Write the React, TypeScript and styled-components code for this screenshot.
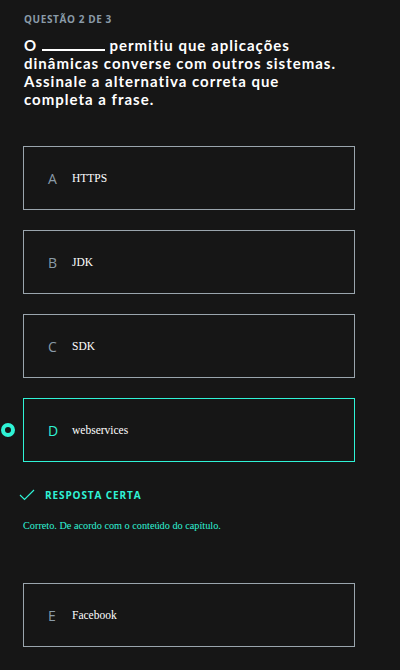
import React from "react";
import styled, { createGlobalStyle } from "styled-components";

const CYAN = "#2ff3d6";

const GlobalStyle = createGlobalStyle`
  html, body {
    margin: 0;
    background: #161616;
  }
`;

type Option = { letter: string; text: string };

const OPTIONS: Option[] = [
  { letter: "A", text: "HTTPS" },
  { letter: "B", text: "JDK" },
  { letter: "C", text: "SDK" },
  { letter: "D", text: "webservices" },
  { letter: "E", text: "Facebook" },
];

const SELECTED = "D";

const App = () => {
  return (
    <>
      <GlobalStyle />
      <Page>
        <Counter>Questão 2 de 3</Counter>
        <Question>
          O <Blank /> permitiu que aplicações
          <br />
          dinâmicas converse com outros sistemas.
          <br />
          Assinale a alternativa correta que
          <br />
          completa a frase.
        </Question>
        <OptionList>
          {OPTIONS.map((option) => {
            const selected = option.letter === SELECTED;
            return (
              <OptionBlock key={option.letter} $spaced={option.letter === "E"}>
                <OptionBox $selected={selected}>
                  {selected && <Radio />}
                  <Letter $selected={selected}>{option.letter}</Letter>
                  <OptionText>{option.text}</OptionText>
                </OptionBox>
                {selected && (
                  <Feedback>
                    <FeedbackTitle>
                      <svg width="16" height="12" viewBox="0 0 16 12">
                        <polyline
                          points="1,6 5.5,10.5 15,1"
                          fill="none"
                          stroke={CYAN}
                          strokeWidth="1.2"
                        />
                      </svg>
                      Resposta certa
                    </FeedbackTitle>
                    <FeedbackText>
                      Correto. De acordo com o conteúdo do capítulo.
                    </FeedbackText>
                  </Feedback>
                )}
              </OptionBlock>
            );
          })}
        </OptionList>
      </Page>
    </>
  );
};

const Page = styled.div`
  padding: 12px 45px 24px 23px;
  font-family: "Open Sans", Lato, sans-serif;
`;

const Counter = styled.div`
  font-size: 10px;
  font-weight: 700;
  text-transform: uppercase;
  color: #8a9ba8;
  letter-spacing: 0.6px;
  padding-left: 1px;
`;

const Question = styled.h1`
  margin: 10px 0 0;
  padding-left: 1px;
  font-family: Lato, sans-serif;
  font-size: 15px;
  line-height: 18px;
  font-weight: 700;
  color: #ffffff;
  letter-spacing: 1px;
  white-space: nowrap;
`;

const Blank = styled.span`
  display: inline-block;
  width: 63px;
  height: 1px;
  border-bottom: 2px solid #ffffff;
  vertical-align: baseline;
`;

const OptionList = styled.div`
  display: flex;
  flex-direction: column;
  gap: 20px;
  margin-top: 38px;
`;

const OptionBlock = styled.div<{ $spaced: boolean }>`
  margin-top: ${({ $spaced }) => ($spaced ? "32px" : "0")};
`;

const OptionBox = styled.div<{ $selected: boolean }>`
  position: relative;
  display: flex;
  align-items: center;
  height: 64px;
  box-sizing: border-box;
  padding-left: 24px;
  border: 1px solid ${({ $selected }) => ($selected ? CYAN : "#9aa5ad")};
`;

const Radio = styled.span`
  position: absolute;
  left: -23px;
  top: 50%;
  width: 14px;
  height: 14px;
  margin-top: -7px;
  box-sizing: border-box;
  border-radius: 50%;
  border: 4px solid ${CYAN};
`;

const Letter = styled.span<{ $selected: boolean }>`
  width: 24px;
  font-size: 14px;
  color: ${({ $selected }) => ($selected ? CYAN : "#8a9ba8")};
`;

const OptionText = styled.span`
  font-family: "Liberation Serif", serif;
  font-size: 11.5px;
  color: #ffffff;
`;

const Feedback = styled.div`
  padding-top: 26px;
`;

const FeedbackTitle = styled.div`
  display: flex;
  align-items: center;
  gap: 10px;
  margin-left: -4px;
  font-size: 10px;
  font-weight: 700;
  text-transform: uppercase;
  letter-spacing: 0.9px;
  color: ${CYAN};
`;

const FeedbackText = styled.p`
  margin: 18px 0 0;
  font-family: "Liberation Serif", serif;
  font-size: 10.25px;
  color: ${CYAN};
`;

export default App;
